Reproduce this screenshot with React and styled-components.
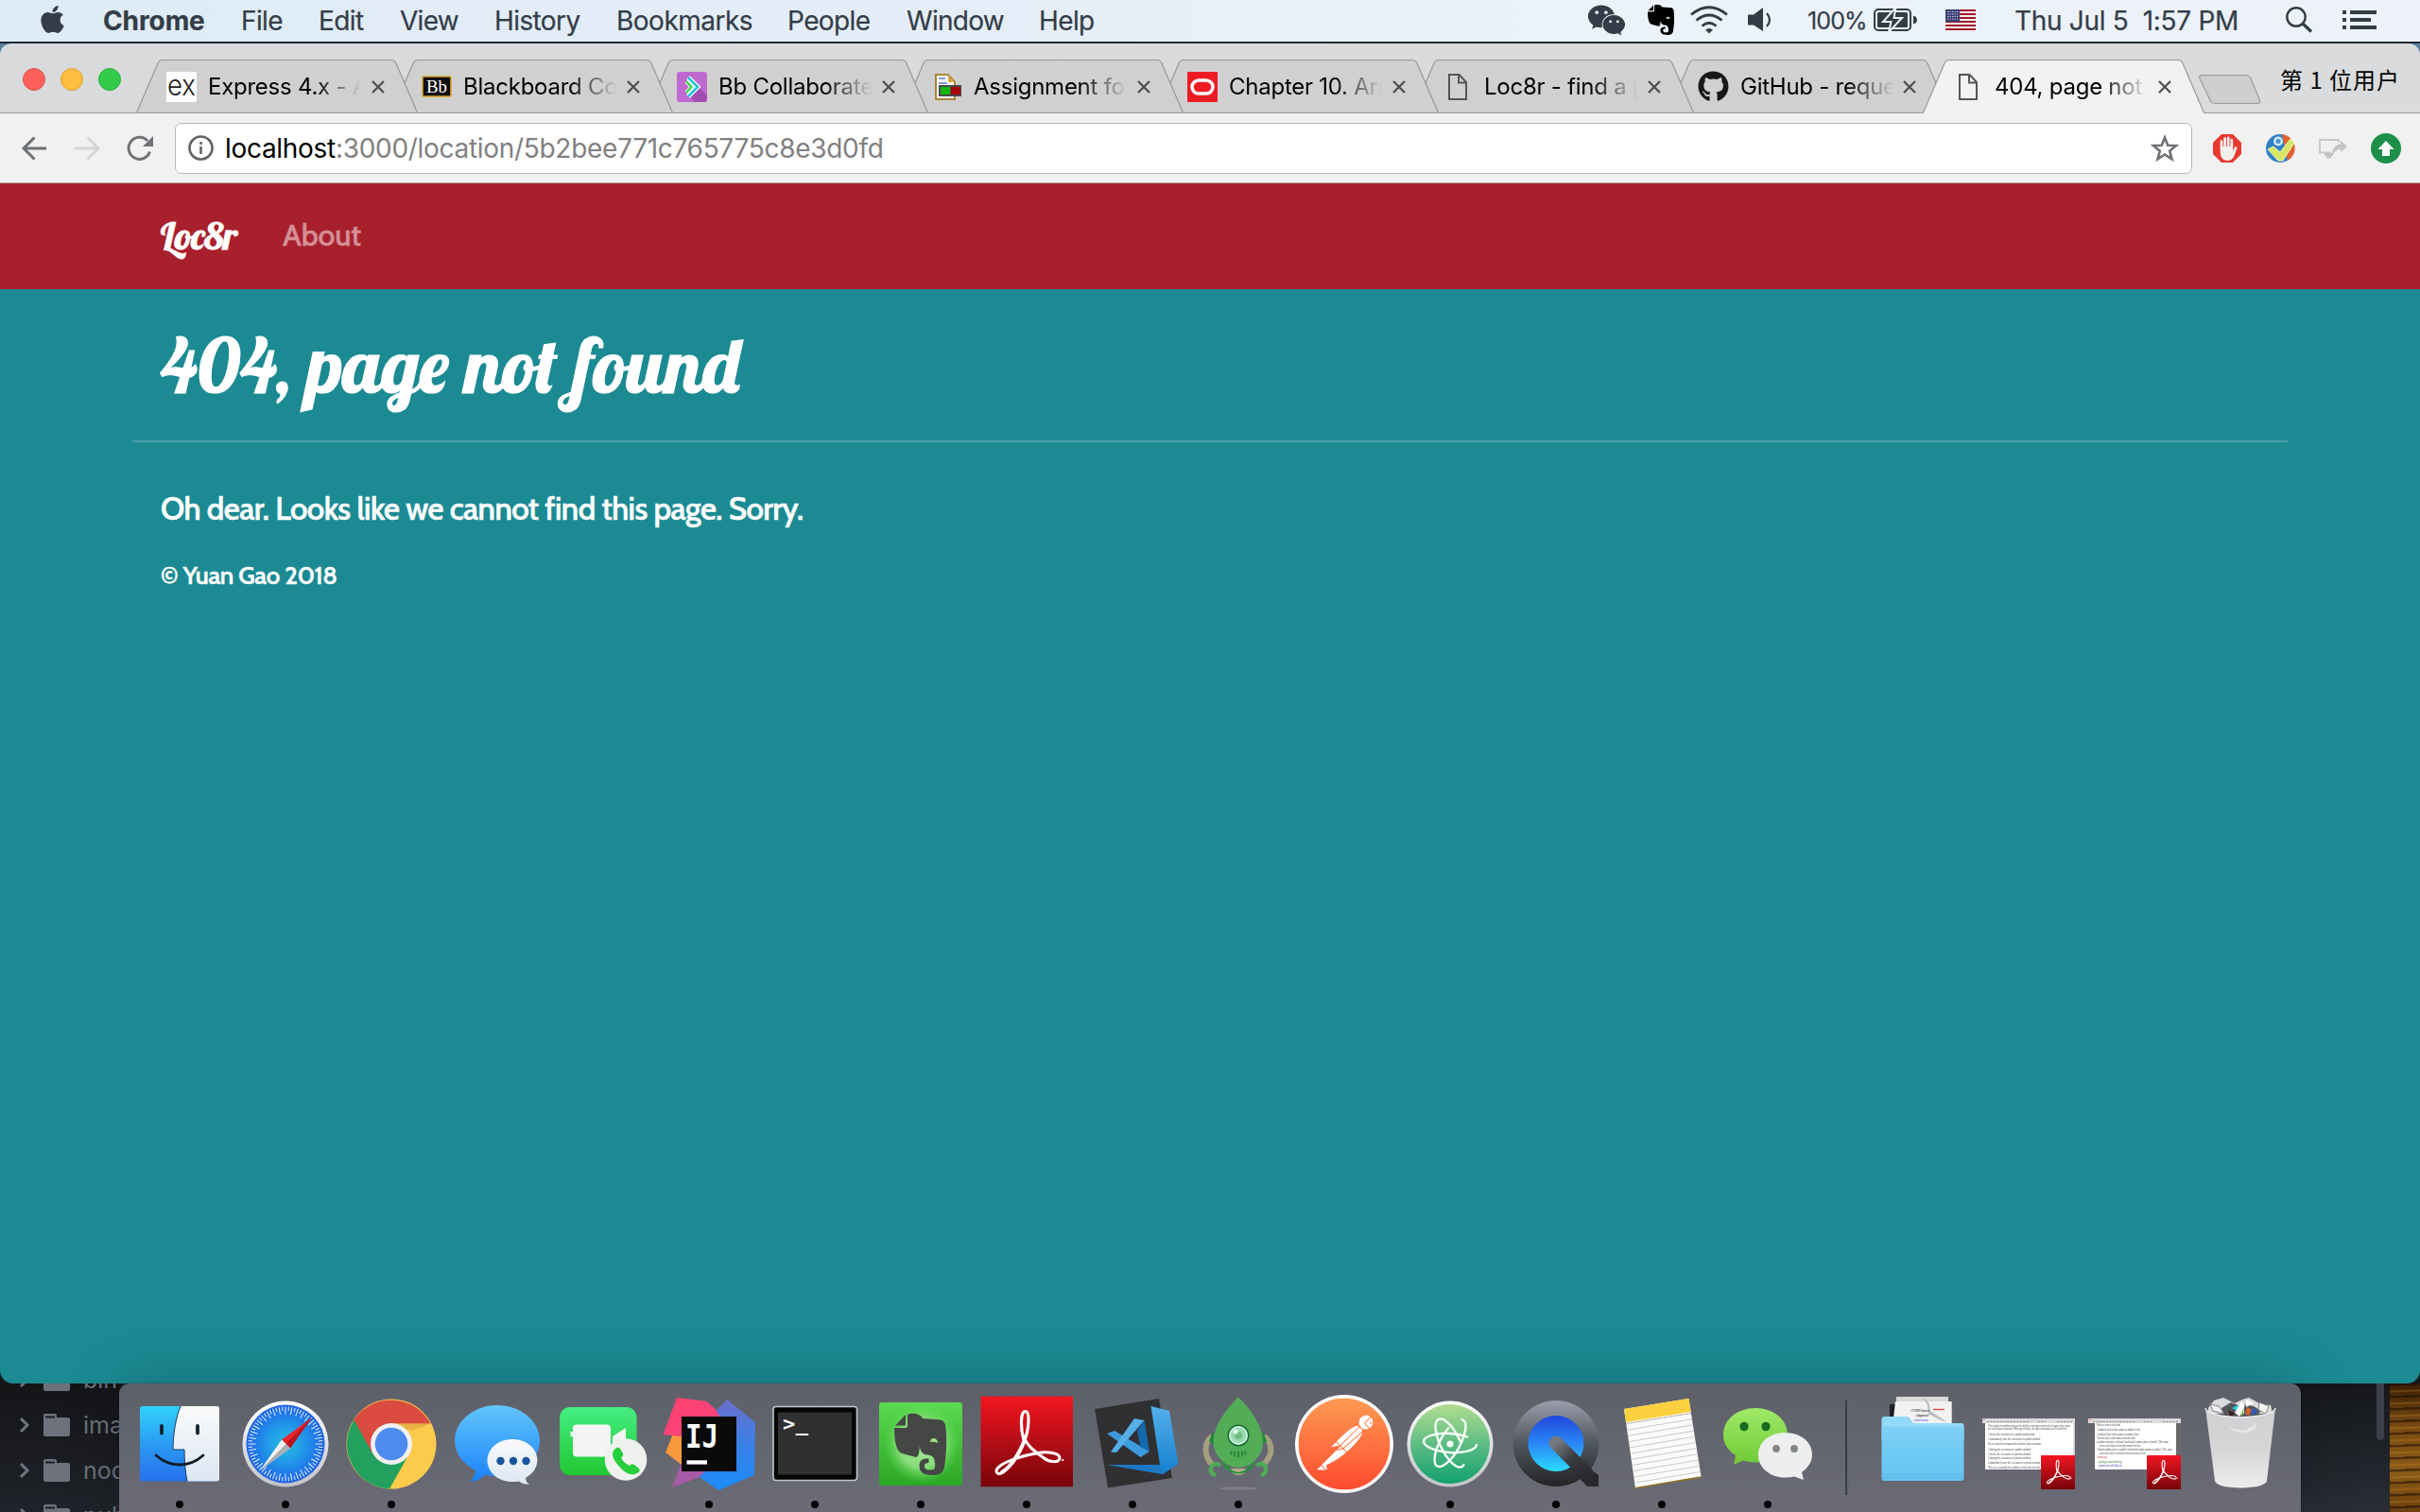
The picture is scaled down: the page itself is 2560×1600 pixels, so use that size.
import React from "react";
import styled, { createGlobalStyle, css } from "styled-components";
import { FaApple, FaWeixin, FaGithub } from "react-icons/fa";
import { SiPostman } from "react-icons/si";

const GlobalStyle = createGlobalStyle`
  * { box-sizing: border-box; }
  body { margin: 0; background: #17191d; font-family: Inter, "Liberation Sans", sans-serif; }
  svg { display: block; flex: none; }
`;

const Screen = styled.div`
  width: 2560px;
  height: 1600px;
  display: flex;
  flex-direction: column;
  overflow: hidden;
  background: linear-gradient(#3f5a75 0, #3f5a75 200px, #17191d 201px);
`;

/* ---------- menu bar ---------- */
const MenuBar = styled.header`
  height: 46px;
  flex: none;
  display: flex;
  align-items: center;
  padding: 0 46px 2px 42px;
  background: linear-gradient(90deg, #deebf5, #e5eef8 40%, #ebf2fa 65%, #edf2f9);
  border-bottom: 2px solid #1d2937;
  color: #333d47;
`;
const Menus = styled.nav`
  display: flex;
  gap: 38px;
  margin-left: 41px;
  flex: 1;
`;
const MenuItem = styled.span`
  width: ${(p) => p.$w}px;
  padding-top: 3px;
  font-size: 28px;
  line-height: 39px;
  font-weight: ${(p) => (p.$bold ? 700 : 400)};
  letter-spacing: ${(p) => p.$ls ?? -0.5}px;
  white-space: nowrap;
  -webkit-text-stroke: 0.2px currentColor;
`;
const StatusArea = styled.div`
  display: flex;
  align-items: center;
`;
const Status = styled.div`
  width: ${(p) => p.$w}px;
  margin-right: ${(p) => p.$gap}px;
`;
const StatusText = styled(Status)`
  padding-top: 3px;
  font-size: ${(p) => p.$size}px;
  letter-spacing: ${(p) => p.$ls}px;
  line-height: 39px;
  white-space: pre;
  -webkit-text-stroke: 0.2px currentColor;
`;

/* ---------- browser window ---------- */
const Window = styled.main`
  height: 1418px;
  flex: none;
  display: flex;
  flex-direction: column;
  border-radius: 12px 12px 14px 14px;
  overflow: hidden;
  background: #1c8a93;
`;
const WindowBack = styled.div`
  background: linear-gradient(#5f7f9f 0, #5f7f9f 100px, #15171a 101px);
`;
const TabStrip = styled.div`
  height: 74px;
  flex: none;
  display: flex;
  background: linear-gradient(90deg, #d8dadb, #dadbdd);
  box-shadow: inset 0 -1px #999;
  padding-left: 24px;
`;
const Lights = styled.div`
  display: flex;
  gap: 16px;
  width: 120px;
  padding-top: 26px;
`;
const Light = styled.i`
  width: 24px;
  height: 24px;
  border-radius: 50%;
  background: ${(p) => p.$fill};
  border: 1px solid ${(p) => p.$edge};
`;
const Tab = styled.div`
  position: relative;
  z-index: ${(p) => p.$z};
  width: 298px;
  height: 57px;
  margin: 17px -28px 0 0;
  padding: 0 35px 0 32px;
  display: flex;
  align-items: center;
  flex: none;
`;
const TabShape = styled.svg`
  position: absolute;
  left: 0;
  top: 0;
  z-index: -1;
`;
const TabLabel = styled.span`
  width: 164px;
  margin: 0 9px 0 12px;
  font-size: 24px;
  letter-spacing: -0.25px;
  white-space: nowrap;
  overflow: hidden;
  color: #000;
  mask-image: linear-gradient(90deg, #000 112px, transparent 162px);
`;
const NewTab = styled.div`
  margin: 33px 0 0 22px;
`;
const UserName = styled.span`
  margin: 18px 0 0 20px;
  font: 24px/40px "Noto Sans CJK SC", sans-serif;
  letter-spacing: 1px;
  color: #000;
  white-space: nowrap;
`;
const Toolbar = styled.div`
  height: 74px;
  flex: none;
  display: flex;
  align-items: center;
  background: #f1f1f1;
  border-bottom: 1px solid #b4b0b0;
  padding: 0 20px 0 22px;
`;
const NavButtons = styled.div`
  display: flex;
  gap: 26px;
  width: 163px;
`;
const UrlField = styled.div`
  height: 54px;
  width: 2134px;
  display: flex;
  align-items: center;
  background: #fff;
  border: 1px solid #b5b5b5;
  border-radius: 7px;
  padding: 0 12px 0 13px;
`;
const Url = styled.span`
  flex: 1;
  margin-left: 12px;
  font-size: 28px;
  letter-spacing: -0.3px;
  color: #808080;
  b { font-weight: 400; color: #000; }
`;
const Extensions = styled.div`
  flex: 1;
  display: flex;
  align-items: center;
  justify-content: space-between;
  padding-left: 21px;
`;

/* ---------- page ---------- */
const SiteNav = styled.div`
  height: 112px;
  flex: none;
  display: flex;
  align-items: center;
  background: #a9202d;
  padding: 0 170px 2px;
`;
const script = css`
  font-family: Lobster, "Liberation Serif", serif;
  font-weight: 400;
  color: #fff;
  white-space: nowrap;
`;
const Brand = styled.a`
  ${script}
  width: 129px;
  font-size: 40px;
  line-height: 60px;
  -webkit-text-stroke: 0.8px #fff;
`;
const NavLink = styled.a`
  font: 500 32px/56px Cabin, Lato, sans-serif;
  letter-spacing: -0.15px;
  color: #d48f96;
  -webkit-text-stroke: 0.4px #d48f96;
`;
const Title = styled.h1`
  ${script}
  margin: 27px 0 0;
  padding-left: 30px;
  font-size: 80px;
  line-height: 106px;
  -webkit-text-stroke: 1.2px #fff;
`;
const Article = styled.section`
  padding: 0 140px;
`;
const Rule = styled.hr`
  height: 2px;
  border: 0;
  margin: 27px 0 0;
  background: #499fa8;
`;
const Lead = styled.p`
  margin: 48px 30px 0;
  font: 500 33px/44px Cabin, Lato, sans-serif;
  letter-spacing: -0.56px;
  color: #fff;
  -webkit-text-stroke: 0.5px #fff;
`;
const Footnote = styled.p`
  margin: 31px 30px 0;
  font: 500 26px/36px Cabin, Lato, sans-serif;
  letter-spacing: -0.35px;
  color: #fff;
  -webkit-text-stroke: 0.5px #fff;
`;

/* ---------- bottom of desktop ---------- */
const Bottom = styled.div`
  height: 136px;
  display: grid;
  grid-template-columns: 126px 2308px 126px;
`;
const FileTree = styled.div`
  height: 136px;
  overflow: hidden;
  background: linear-gradient(#141517, #20232a);
  ul { list-style: none; margin: -28px 0 0; padding: 0 0 0 20px; }
`;
const FileRow = styled.li`
  height: 48px;
  display: flex;
  align-items: center;
  gap: 14px;
  font-size: 25px;
  color: #6c727c;
  white-space: nowrap;
`;
const Dock = styled.div`
  position: relative;
  z-index: 2;
  display: flex;
  padding-left: 8px;
  border-radius: 11px 11px 0 0;
  background: linear-gradient(#5e6069, #6a6b76);
  box-shadow: 0 0 60px rgba(0, 10, 15, 0.22), 0 0 2px rgba(0, 0, 0, 0.4);
`;
const Divider = styled.div`
  width: 4px;
  height: 100px;
  margin: 18px 22px 18px 26px;
  border-left: 2px solid #393c46;
  border-right: 2px solid #62646e;
`;
const RightEdge = styled.div`
  display: flex;
  justify-content: flex-end;
  background: linear-gradient(#15171a, #292d35);
`;
const ScrollThumb = styled.div`
  width: 8px;
  height: 60px;
  margin-right: 6px;
  border-radius: 0 0 4px 4px;
  background: #3c404b;
`;
const Wallpaper = styled.div`
  width: 32px;
  background:
    repeating-linear-gradient(178deg, rgba(20, 8, 0, 0.5) 0 2px, transparent 3px 7px, rgba(220, 150, 40, 0.25) 8px 9px, transparent 10px 13px),
    linear-gradient(#3a1f06, #7a4c12 35%, #8a5a17 70%, #6b4010);
`;
const PaintDefs = styled.svg`
  position: absolute;
`;

const Close = () => (
  <svg width="14" height="14" viewBox="0 0 14 14">
    <path d="M1 1l12 12M13 1L1 13" stroke="#4c4c4c" strokeWidth="2.2" />
  </svg>
);

const DocIcon = () => (
  <svg width="32" height="32" viewBox="0 0 32 32">
    <path d="M7 3h10.500l7.500 8v18H7zM17 3v8.500h8" fill="none" stroke="#555" strokeWidth="2" />
  </svg>
);

const Elephant = ({ fill, eye, transform }) => (
  <g transform={transform}>
    <path d="M29 44.500L40 33v11.500z" fill={fill} />
    <path
      d="M42 33C46 31 55 31 58 37L72 38C80 38 82 41 82.500 47C84 60 83 76 81 88C80 95 76 97 68 97C58 97 54.500 93 54.500 87C54.500 81 58 79.500 64.500 79.500V84C61 84 59.500 85 60 88C60.500 91 63 91.500 67 91.500C71 91.500 71.500 89 71 84C70.500 78 68 76 63 75.500C57 75 55 71 55 65C54.500 73 54 78 51 78L36 74C30 72 28 60 28 47H39C42 47 42 46 42 43z"
      fill={fill}
    />
    <path d="M66 62q0-4 4-4 4 1 4 5-4-2-8-1z" fill={eye} />
  </g>
);

const favicons = {
  express: (
    <svg width="32" height="32" viewBox="0 0 32 32">
      <rect width="32" height="32" fill="#fff" />
      <text x="1" y="24.500" fontSize="30" fontWeight="300" textLength="30" lengthAdjust="spacingAndGlyphs" fill="#222" fontFamily="Inter">ex</text>
    </svg>
  ),
  blackboard: (
    <svg width="32" height="32" viewBox="0 0 32 32">
      <rect x="1" y="5" width="30" height="21" rx="1" fill="#0d0d0d" stroke="#d9a62a" strokeWidth="1.600" />
      <text x="5" y="22" fontSize="19" fontWeight="400" textLength="22" lengthAdjust="spacingAndGlyphs" fill="#fff" fontFamily="Liberation Serif">Bb</text>
    </svg>
  ),
  collaborate: (
    <svg width="32" height="32" viewBox="0 0 32 32">
      <rect width="32" height="32" rx="3" fill="#c069d0" />
      <path d="M15 27l9-10 8 8v4q0 3-3 3H19z" fill="#a24fb4" />
      <path d="M12 6l10 10-10 10" fill="none" stroke="#fff" strokeWidth="5" />
      <path d="M12 6l10 10-10 10" fill="none" stroke="#19c3dc" strokeWidth="2.500" />
      <path d="M10 10l5.500 6-5.500 6" fill="none" stroke="#fff" strokeWidth="4" />
      <path d="M10 10l5.500 6-5.500 6" fill="none" stroke="#22d63a" strokeWidth="2" />
    </svg>
  ),
  assignment: (
    <svg width="32" height="32" viewBox="0 0 32 32">
      <path d="M4 3h13l7 8v18H4z" fill="#fff" stroke="#a98537" strokeWidth="2" />
      <path d="M17 3v8h7z" fill="#d9a544" />
      <path d="M7 7h7M7 12h9" stroke="#8797c5" strokeWidth="2" />
      <rect x="7" y="14" width="24" height="12" fill="#4a4a4a" />
      <rect x="9" y="16" width="10" height="8" fill="#12b80e" />
      <rect x="20" y="16" width="10" height="8" fill="#a60505" />
    </svg>
  ),
  oracle: (
    <svg width="32" height="32" viewBox="0 0 32 32">
      <rect width="32" height="32" fill="#ed1c24" />
      <rect x="5" y="9" width="22" height="14" rx="7" fill="none" stroke="#fff" strokeWidth="3.500" />
    </svg>
  ),
  doc: <DocIcon />,
  github: <FaGithub size={33} color="#1a1718" />,
};

const tabs = [
  ["express", "Express 4.x - API"],
  ["blackboard", "Blackboard Collab"],
  ["collaborate", "Bb Collaborate U"],
  ["assignment", "Assignment for w"],
  ["oracle", "Chapter 10. Arrays"],
  ["doc", "Loc8r - find a pla"],
  ["github", "GitHub - request/"],
  ["doc", "404, page not fo"],
];

const menus = [
  ["Chrome", 108, -0.1],
  ["File", 44, -0.6],
  ["Edit", 48, -0.6],
  ["View", 62, -0.7],
  ["History", 91, -0.6],
  ["Bookmarks", 143, -0.5],
  ["People", 88, -0.6],
  ["Window", 102, -0.7],
  ["Help", 60, -0.6],
];

const AdobeMark = ({ transform }) => (
  <g transform={transform} fill="none" stroke="#fff" strokeLinecap="round" strokeLinejoin="round">
    <path d="M53 60C50 50 48.500 29 55 29.500C60 30 58 50 54 60" strokeWidth="3.200" />
    <path d="M54 60C47 77 35 92 29 95C24 97 22 92 27 88C34 82 53 76 68 73.500C78 72 91 73 91 79C90 85 79 83 73 78C62 70 56 65 53 56" strokeWidth="3" />
    <path d="M54 60C47 77 38 89 30 94" strokeWidth="4" />
    <circle cx="94" cy="81" r=".8" strokeWidth="1" />
  </g>
);

const Thumb = ({ lines, side }) => (
  <g>
    <rect x="7" y="37" width="98" height="54" fill="#fff" />
    <rect x="7" y="37" width="98" height="5" fill="#dcdadb" />
    <circle cx="8.800" cy="38.200" r=".8" fill="#e4574f" />
    <path d="M12 40.500h46M66 40.500h8M86 40.500h17" stroke="#8b8d93" strokeWidth="1" strokeDasharray="2 1.500" />
    <rect x="7" y="42" width={side ? 7 : 3} height="49" fill="#66676a" />
    <rect x={side ? 100 : 103.500} y="42" width={side ? 5 : 1.500} height="36" fill={side ? "#66676a" : "#c9c9c9"} />
    {lines.map(([x, y, t, w, fill]) => (
      <text key={y} x={x} y={y} fontSize="3.400" textLength={w} lengthAdjust="spacingAndGlyphs" fill={fill || "#333"} fontFamily="Liberation Serif">{t}</text>
    ))}
    <rect x="69" y="76" width="36" height="36" fill="url(#adobe)" />
    <AdobeMark transform="translate(66.500 70.500) scale(.37)" />
  </g>
);

const ticks = Array.from({ length: 72 }, (_, i) => i * 5);

const dockIcons = [
  ["finder", true, (
    <g>
      <rect x="14" y="24" width="84" height="79.500" rx="3" fill="url(#finderBlue)" />
      <path d="M57 24H95q3 0 3 3v73.500q0 3-3 3H64C62 94 61 82 61 70H49C49 54 52 36 57 24z" fill="url(#paper)" />
      <path d="M57 24C52 36 49 54 49 70H61C61 82 62 94 64 103.500" fill="none" stroke="#173b63" strokeWidth="1" />
      <path d="M37 45v7.500M75 45v7.500" stroke="#15212d" strokeWidth="3.800" strokeLinecap="round" />
      <path d="M31 76Q42 86 56 86T81 76" fill="none" stroke="#141c26" strokeWidth="2.800" strokeLinecap="round" />
    </g>
  )],
  ["safari", true, (
    <g>
      <circle cx="56" cy="64" r="45.500" fill="url(#ring)" />
      <circle cx="56" cy="64" r="41.500" fill="url(#safari)" />
      {ticks.map((a) => (
        <path key={a} d={a % 10 ? "M56 24.500v4.500" : "M56 24.500v8"} stroke="#e3f0fa" strokeWidth="1" transform={`rotate(${a} 56 64)`} />
      ))}
      <path d="M84 36L52 59.500 61 68.500z" fill="#e9232c" />
      <path d="M84 36L56.500 64 61 68.500z" fill="#b9141f" />
      <path d="M29 92L52 59.500 61 68.500z" fill="#f2f2f2" />
      <path d="M29 92L56.500 64 61 68.500z" fill="#a9adb3" />
    </g>
  )],
  ["chrome", true, (
    <g>
      <circle cx="56" cy="64" r="47.500" fill="#fdcb4c" />
      <path d="M15.500 39.500A47.500 47.500 0 0 1 97.500 42.500H56L35 76z" fill="#db4b40" />
      <path d="M16.500 38.500A47.500 47.500 0 0 0 54 111.500L74 76 56 64 36 74z" fill="#24a05e" />
      <path d="M56 42.500H97.500L77 50z" fill="#d99a3a" opacity=".55" />
      <circle cx="56" cy="64" r="22" fill="#f1f1f1" />
      <circle cx="56" cy="64" r="17.300" fill="#4c8bf0" />
    </g>
  )],
  ["messages", false, (
    <g>
      <path d="M56 23C81 23 101 40 101 60.500S81 98 56 98Q49 98 43 96.500 36 104 27 103.500 33 98 33 92 11 80 11 60.500C11 40 31 23 56 23z" fill="url(#blueBubble)" />
      <path d="M72 59C87 59 98.500 69 98.500 81.500Q98 93 86 100 86 104 90 107 82 106.500 79 103.500 76 104 72 104C57 104 45.500 94 45.500 81.500S57 59 72 59z" fill="url(#paper)" />
      <g fill="#17549b"><circle cx="59.500" cy="82" r="4.200" /><circle cx="73" cy="82" r="4.200" /><circle cx="86.500" cy="82" r="4.200" /></g>
    </g>
  )],
  ["facetime", false, (
    <g>
      <rect x="10" y="25" width="81.500" height="72" rx="11" fill="url(#green)" />
      <rect x="24" y="43.500" width="40" height="34" rx="4" fill="#f3f5f3" />
      <rect x="21.500" y="51" width="3" height="5" fill="#e7f5e8" />
      <path d="M66 56L80 47v28L66 66z" fill="#f3f5f3" />
      <circle cx="80" cy="80.500" r="22.300" fill="#eef1ee" />
      <path d="M69 69q3-3 5 0l3 5q1 3-2 4 2 6 9 9 2-3 5-1l5 4q2 3-2 5-7 4-16-4-11-11-10-17 0-3 3-5z" fill="#27cf3c" />
    </g>
  )],
  ["intellij", true, (
    <g>
      <path d="M18 53L10 73 40 96 50 60z" fill="#f9993d" />
      <path d="M27 84L16.600 110 66 92 85 46 53 18.700 45 60z" fill="#a75aa5" />
      <path d="M22 15L53 18.700 83 46 60 60 7.600 54z" fill="url(#ijPink)" />
      <path d="M75 17L105 41 104 97 66.400 113 46 99 85 60 63.500 29z" fill="url(#ijBlue)" />
      <rect x="27" y="35" width="58" height="58" fill="#0a0a0a" />
      <text x="31" y="68" fontSize="34" fontWeight="700" textLength="35" lengthAdjust="spacingAndGlyphs" fill="#fff" fontFamily="DejaVu Sans Mono">IJ</text>
      <rect x="32.500" y="81.300" width="21.500" height="4.300" fill="#fff" />
    </g>
  )],
  ["terminal", true, (
    <g>
      <rect x="12" y="24.500" width="88.500" height="78" rx="3" fill="#050505" stroke="#c1c7cb" strokeWidth="1.600" />
      <rect x="17" y="30.500" width="78" height="66" fill="#303030" />
      <text x="22" y="50" fontSize="22" fontWeight="700" textLength="27" fill="#fff" fontFamily="DejaVu Sans Mono">&gt;_</text>
    </g>
  )],
  ["evernote", true, (
    <g>
      <rect x="12" y="20" width="88" height="88" rx="3" fill="url(#everGreen)" />
      <ellipse cx="57" cy="64" rx="40" ry="42" fill="url(#everGlow)" />
      <Elephant fill="#454745" eye="#9be489" />
    </g>
  )],
  ["acrobat", true, (
    <g>
      <rect x="7.500" y="13.700" width="97.500" height="95.500" fill="url(#adobe)" />
      <AdobeMark />
    </g>
  )],
  ["vscode", true, (
    <g>
      <path d="M16 27L84 16 98 100 30 110.500z" fill="#303033" />
      <path d="M29 53L37 50 74 72 64.500 78z" fill="#3c9bdc" />
      <path d="M68.500 39L74 72 64.500 67 61 50z" fill="#1568ad" />
      <path d="M33 72.500L58 37 68.500 39 39 73z" fill="#55aee9" />
      <path d="M30 86L85 86 75.500 24 95 29 104.500 85 88 96z" fill="url(#codeBlue)" />
      <path d="M30 86H85L88 96z" fill="#1c78c2" />
    </g>
  )],
  ["robo", true, (
    <g>
      <path d="M28 56Q20 62 22 74 23 81 29 86M83 56Q92 62 90 74 88 81 82 86" fill="none" stroke="#a3a07f" strokeWidth="6" />
      <path d="M48 90q0 7 8 7t8-7z" fill="#b1ab86" />
      <path d="M29 51l-4 10 6 5zM82 51l4 10-6 5z" fill="#1f8a38" />
      <path d="M38 80Q48 94 56 94T74 80L70 90Q62 95.500 56 95.500T42 90z" fill="#24913e" />
      <path d="M56 14.500C70 28 82 46 82 62 82 76 70 89 56 89S29.500 76 29.500 62C29.500 46 42 28 56 14.500z" fill="#53ad57" />
      <circle cx="56" cy="55" r="11.500" fill="#166b31" />
      <circle cx="56" cy="55" r="10" fill="#d4f7e6" />
      <circle cx="56" cy="55" r="8.300" fill="#98d9ad" />
      <circle cx="56" cy="55" r="4" fill="#70bd83" />
      <circle cx="53" cy="51" r="2.600" fill="#dff5e8" />
      <path d="M48.500 71.500v4M52 71.500v6M56 71.500v6.500M60 71.500v6M63.500 71.500v4" stroke="#1f8437" strokeWidth="1.800" />
      <path d="M37 87Q31 83 27.500 88 25 95 32 97M75 87Q81 83 84.500 88 87 95 80 97" fill="none" stroke="#4eaa56" strokeWidth="4.500" />
      <ellipse cx="56" cy="111" rx="20" ry="1.800" fill="#7e7f83" />
    </g>
  )],
  ["postman", false, (
    <g>
      <circle cx="56" cy="64" r="52" fill="#fff" />
      <SiPostman x="7.500" y="15.500" size={97} fill="url(#postman)" />
    </g>
  )],
  ["atom", true, (
    <g>
      <circle cx="56" cy="64" r="45.500" fill="url(#ring)" />
      <circle cx="56" cy="64" r="42" fill="url(#atom)" />
      <g fill="none" stroke="#f5fff8" strokeWidth="2.400" strokeLinecap="round">
        <ellipse cx="56" cy="63" rx="28" ry="10" strokeDasharray="112 14" transform="rotate(4 56 63)" />
        <ellipse cx="56" cy="63" rx="28" ry="10.500" strokeDasharray="100 24" transform="rotate(64 56 63)" />
        <ellipse cx="56" cy="63" rx="28" ry="10.500" strokeDasharray="108 18" transform="rotate(-61 56 63)" />
      </g>
      <circle cx="56" cy="64" r="3.500" fill="#fff" />
    </g>
  )],
  ["quicktime", true, (
    <g>
      <circle cx="56" cy="63.500" r="45.500" fill="url(#qtRing)" />
      <path d="M70 74L101 97V109H89L66 84z" fill="#26282b" />
      <circle cx="56" cy="63.500" r="29.500" fill="url(#qtBlue)" />
      <path d="M56 63L88 95" stroke="url(#qtTail)" strokeWidth="15" strokeLinecap="round" />
    </g>
  )],
  ["notes", true, (
    <g>
      <path d="M16 27L84.500 16 97.600 99 28 110.700z" fill="#fafafa" />
      <path d="M28 110.700L97.600 99" stroke="#8d6f1d" strokeWidth="1.500" />
      <path d="M16 27L84.500 16 86.600 30 18 41z" fill="#fcd03f" />
      <path d="M18.500 42.500L87 31.500" stroke="#888" strokeWidth="1" strokeDasharray="1.500 1" />
      {[1, 2, 3, 4, 5, 6, 7, 8, 9, 10].map((i) => (
        <path key={i} d={`M${18.500 + i * 0.95} ${43 + i * 6.200}L${87 + i * 0.95} ${31.500 + i * 6.200}`} stroke="#c9c9c9" strokeWidth="1" />
      ))}
    </g>
  )],
  ["wechat", true, (
    <g>
      <path d="M43 26C62 26 77 38 77 54.500S62 83.500 43 83.500Q36 83.500 30 81.500L20 86 22 76Q9 68 9 54.500C9 38 24 26 43 26z" fill="url(#wxGreen)" />
      <g fill="#176b20"><ellipse cx="31" cy="45.500" rx="4.600" ry="4.800" /><ellipse cx="54" cy="45.500" rx="4.600" ry="4.800" /></g>
      <path d="M74.500 52C91 52 103 62 103 75.500Q103 86 92 94L94 102 84 98.500Q80 99.500 74.500 99.500C58 99.500 46 89 46 75.500S58 52 74.500 52z" fill="#eceeef" />
      <g fill="#838789"><circle cx="65" cy="69" r="3.900" /><circle cx="84" cy="69" r="3.900" /></g>
    </g>
  )],
];

const dockFiles = [
  ["documents", (
    <g>
      <path d="M21 22h10v20H21z" fill="#1e1f22" />
      <path d="M28 14H83v8H28z" fill="#d9d9d9" />
      <path d="M27 19H86.700V46H24z" fill="#f2f2f2" />
      <path d="M55 15C62 17 64 23 64 29L82 41Q66 36 62 31 62 20 55 15z" fill="#bdbdbd" />
      <text x="43" y="29.500" fontSize="4" textLength="20" fill="#444" fontFamily="Liberation Serif">COMP6 System</text>
      <text x="48" y="34.500" fontSize="4" textLength="15" fill="#444" fontFamily="Liberation Serif">Assignment 7</text>
      <path d="M67 27.500H79" stroke="#e05252" strokeWidth="1.500" />
      <path d="M47 39H62" stroke="#6d7be0" strokeWidth="1" />
      <path d="M12.500 38q0-3 3-3H39q3 0 4 3l2 3q1 1 3 1H97q2.500 0 2.500 3V60h-87z" fill="#93d9fc" />
      <path d="M12.500 47q0-1.500 2-1.500H97.500q2 0 2 1.500v53q0 3-3 3h-81q-3 0-3-3z" fill="url(#folder)" />
      <path d="M13 96.500H99M13 99.500H99" stroke="#54b5e2" strokeWidth=".8" />
    </g>
  )],
  ["pdf-one", (
    <Thumb lines={[
      [13, 45.500, "These kinds of conditions that need to hold for each object and for the lifespan of the object", 87],
      [13, 49, "are called object invariants. More specifically, our object invariants need to hold true", 83],
      [13, 55, "1  before the execution of a public method and", 49],
      [13, 59.500, "2  immediately after the execution of a public method", 55],
      [13, 65, "We are allowed to temporarily break the object invariant", 56],
      [13, 71, "1  during the execution of a public method", 45],
      [13, 75.500, "2  before the execution of a private method", 45],
      [13, 80, "3  during the execution of a private method", 45],
      [13, 84.500, "4  immediately after the execution of a private method", 55],
      [13, 90, "These are essentially the windows of time that our code", 55],
    ]} />
  )],
  ["pdf-two", (
    <Thumb side lines={[
      [16, 44.500, "What we want to check that", 25],
      [16, 50, "1  author1.first is the name as author1.first", 46],
      [16, 54.500, "2  author1.last is the name as author1.last", 44],
      [16, 59, "3  book1.title is the name as book1.title", 41],
      [16, 63, "4  author and price in book1 and book1.author price in book1. The same", 76],
      [19, 66.500, "between the objects in already-formed first files.", 44],
      [16, 71, "5  book1.author price is author1 and book1.author prints is author1. The same", 80],
      [19, 74.500, "between the objects in already-declared last and one fields.", 49],
      [16, 79, "Author.java", 11, "#b33"],
      [18, 83.500, "package samelastthing;", 25, "#2a7a2a"],
      [18, 88, "import java.util.Objects;", 25, "#2b2bd0"],
    ]} />
  )],
  ["trash", (
    <g>
      <path d="M22 26L28 18 38 15 50 21 58 17 65 15 78 22 88 23 90 32H22z" fill="#d9dadb" />
      <path d="M36 26l10-6 10 4 4 10H38zM60 22l10 2 8 5-6 6H60z" fill="#54575b" />
      <path d="M47 26l6-3 6 2-5 5z" fill="#25cfe0" />
      <path d="M43 28l8 4-6 3z" fill="#3a2020" />
      <path d="M63 25l5 3-3 6-4-2z" fill="#d4622e" />
      <path d="M69 26l5 2-2 5-5-1z" fill="#2f5fb5" />
      <path d="M57 24l3 1-2 9-4-1z" fill="#8bc34a" />
      <path d="M24 22l9 2 6 8-12-3zM76 20l10 4-3 8-8-4z" fill="#f3f3f3" stroke="#6b6d70" strokeWidth=".8" />
      <path d="M50 31l7-12 4 4-6 12zM62 17l8 4-8 4z" fill="#fff" />
      <path d="M19 26Q20 34 56 36 92 34 93 26L84 103Q82 110 56 110.500 31 110 29 103z" fill="url(#bin)" />
      <path d="M19 26Q20 34 56 36 92 34 93 26" fill="none" stroke="#f2f3f4" strokeWidth="1.400" />
      <path d="M44 45Q60 56 74 41 72 52 58 52 48 52 44 45z" fill="#fff" opacity=".45" />
    </g>
  )],
];

const Gradient = ({ id, stops, diag }) => (
  <linearGradient id={id} x1="0" y1="0" x2={diag ? 1 : 0} y2="1">
    {stops.map((c, i) => <stop key={i} offset={i / (stops.length - 1)} stopColor={c} />)}
  </linearGradient>
);

const SharedPaints = () => (
  <PaintDefs width="0" height="0">
    <defs>
      <Gradient id="finderBlue" stops={["#2fd2fc", "#2b9cf3", "#2670ec"]} />
      <Gradient id="paper" stops={["#fafafa", "#dbe7f3"]} />
      <Gradient id="ring" stops={["#ffffff", "#c2c3c6"]} />
      <Gradient id="blueBubble" stops={["#62c6fa", "#1a82fb"]} />
      <Gradient id="green" stops={["#45ee82", "#20c832"]} />
      <Gradient id="ijPink" diag stops={["#ff4070", "#fb4276", "#9a62b4"]} />
      <Gradient id="ijBlue" stops={["#6a70ca", "#3a80e8", "#1a8cf8"]} />
      <Gradient id="everGreen" stops={["#5cda50", "#2ba626"]} />
      <Gradient id="adobe" stops={["#f3151f", "#b50d17", "#760408"]} />
      <Gradient id="codeBlue" stops={["#54b0ea", "#157fce"]} />
      <Gradient id="postman" stops={["#fe9a52", "#fd4b2f"]} />
      <Gradient id="atom" stops={["#b3dd90", "#5dbd83", "#12a070"]} />
      <Gradient id="qtRing" stops={["#9a9fac", "#50565e", "#232426"]} />
      <Gradient id="qtBlue" stops={["#1f48df", "#2a86f4", "#2bdcff"]} />
      <Gradient id="qtTail" diag stops={["#747a82", "#3a3d41", "#2a2c2f"]} />
      <Gradient id="wxGreen" stops={["#a0e968", "#6fca35"]} />
      <Gradient id="folder" stops={["#7fd0f7", "#6fcbf5", "#65c2ee"]} />
      <Gradient id="bin" stops={["#cfd1d4", "#d5d5d5", "#eceded"]} />
      <radialGradient id="everGlow">
        <stop offset="0" stopColor="#a9ee9a" />
        <stop offset=".6" stopColor="#9be58c" stopOpacity=".8" />
        <stop offset="1" stopColor="#5cda50" stopOpacity="0" />
      </radialGradient>
      <radialGradient id="safari">
        <stop offset="0" stopColor="#27c0de" />
        <stop offset=".5" stopColor="#2196ea" />
        <stop offset="1" stopColor="#1e62e6" />
      </radialGradient>
    </defs>
  </PaintDefs>
);

const DockIcon = ({ running, children }) => (
  <svg width="112" height="136" viewBox="0 0 112 136">
    {children}
    {running && <circle cx="56" cy="128" r="4" fill="#000" />}
  </svg>
);

export default function App() {
  return (
    <Screen>
      <GlobalStyle />
      <SharedPaints />
      <MenuBar>
        <svg width="26" height="32" viewBox="0 0 26 32"><FaApple x="-3" y="-1" size={33} /></svg>
        <Menus>
          {menus.map(([name, w, ls], i) => (
            <MenuItem key={name} $w={w} $ls={ls} $bold={i === 0}>{name}</MenuItem>
          ))}
        </Menus>
        <StatusArea>
          <Status $w={40} $gap={24}><FaWeixin size={41} /></Status>
          <Status $w={28} $gap={17}>
            <svg width="28" height="32" viewBox="28 32 55 65" preserveAspectRatio="none">
              <Elephant fill="#000" eye="#ebf2fa" />
            </svg>
          </Status>
          <Status $w={40} $gap={21}>
            <svg width="40" height="30" viewBox="0 0 40 30" fill="none" stroke="#333d47" strokeWidth="2.800">
              <path d="M1 9.500Q20-6 39 9.500M6.500 15.500Q20 4.500 33.500 15.500M12.500 21.500Q20 15 27.500 21.500" />
              <path d="M16 25.500Q20 22.500 24 25.500L20 29.500z" fill="#333d47" stroke="none" />
            </svg>
          </Status>
          <Status $w={25} $gap={38}>
            <svg width="26" height="26" viewBox="0 0 26 26">
              <path d="M0 7.500H6L16 0V25L6 18.500H0z" fill="#333d47" />
              <path d="M20 6q6 7 0 14" fill="none" stroke="#333d47" strokeWidth="2.200" />
            </svg>
          </Status>
          <StatusText $w={61} $gap={9} $size={25} $ls={-0.9}>100%</StatusText>
          <Status $w={46} $gap={30}>
            <svg width="46" height="24" viewBox="0 0 46 24">
              <rect x="1" y="1" width="38" height="22" rx="4" fill="none" stroke="#333d47" strokeWidth="2" />
              <rect x="4" y="4" width="32" height="16" rx="1.500" fill="#333d47" />
              <path d="M42 7.500q4 1 4 4.500t-4 4.500z" fill="#333d47" />
              <path d="M23.500-1L10 14h8.500L16 25 30 10h-8.500z" fill="#333d47" stroke="#ebf2fa" strokeWidth="2" />
            </svg>
          </Status>
          <Status $w={32} $gap={41}>
            <svg width="32" height="22" viewBox="0 0 32 22">
              <rect width="32" height="22" fill="#f3f0f0" />
              <path d="M0 1h32M0 5h32M0 9h32M0 13h32M0 17h32M0 21h32" stroke="#a01a2b" strokeWidth="1.900" />
              <rect width="15" height="13" fill="#3a3e74" />
              <path d="M2 2.500h12M2 5h12M2 7.500h12M2 10h12" stroke="#d8d8ea" strokeWidth="1.100" strokeDasharray="1.200 1.300" />
            </svg>
          </Status>
          <StatusText $w={236} $gap={51} $size={28} $ls={-0.3}>Thu Jul 5  1:57 PM</StatusText>
          <Status $w={29} $gap={31}>
            <svg width="29" height="28" viewBox="0 0 29 28" fill="none" stroke="#333d47">
              <circle cx="11" cy="11" r="9.700" strokeWidth="2.400" />
              <path d="M18 18l9 8.500" strokeWidth="3.200" />
            </svg>
          </Status>
          <Status $w={36} $gap={0}>
            <svg width="36" height="20" viewBox="0 0 36 20">
              <path d="M0 2h4M8 2h28M0 10h4M8 10h22M0 18h4M8 18h28" stroke="#333d47" strokeWidth="4" />
            </svg>
          </Status>
        </StatusArea>
      </MenuBar>

      <WindowBack>
        <Window>
          <TabStrip>
            <Lights>
              <Light $fill="#fe615b" $edge="#e2504a" />
              <Light $fill="#ffbe40" $edge="#e0a033" />
              <Light $fill="#33cb4a" $edge="#27ae38" />
            </Lights>
            {tabs.map(([icon, label], i) => {
              const active = i === tabs.length - 1;
              return (
                <Tab key={label} $z={active ? 20 : 10 - i}>
                  <TabShape width="298" height="57" viewBox="0 0 298 57">
                    <path
                      d="M0 57L1.500 54 23 4Q24.500.5 28 .5H270Q273.500.5 275 4L296.500 54 298 57"
                      fill={active ? "#f2f2f2" : "#d0d0d0"}
                      stroke="#979797"
                      strokeWidth="1.200"
                    />
                    {!active && <path d="M0 56.500H298" stroke="#999" />}
                  </TabShape>
                  {favicons[icon]}
                  <TabLabel>{label}</TabLabel>
                  <Close />
                </Tab>
              );
            })}
            <NewTab>
              <svg width="66" height="32" viewBox="0 0 66 32">
                <path d="M4 .7H50Q53 .7 54.500 3L64.500 27Q65.500 30.500 62 30.500H17Q14 30.500 12.500 28L1 4Q0 .7 4 .7z" fill="#cfcfcf" stroke="#9b9b9b" strokeWidth="1.200" />
              </svg>
            </NewTab>
            <UserName>第 1 位用户</UserName>
          </TabStrip>
          <Toolbar>
            <NavButtons>
              <svg width="30" height="28" viewBox="0 0 30 28" fill="none" stroke="#6e7175" strokeWidth="3"><path d="M27 14H3M14.500 2.500L3 14 14.500 25.500" /></svg>
              <svg width="30" height="28" viewBox="0 0 30 28" fill="none" stroke="#d4d5d6" strokeWidth="3"><path d="M1 14H26M14.500 2.500L26 14 14.500 25.500" /></svg>
              <svg width="30" height="28" viewBox="0 0 30 28" fill="none" stroke="#6e7175" strokeWidth="3">
                <path d="M24.500 17.500A11.500 11.500 0 1 1 22 6" />
                <path d="M28 1V12H17z" fill="#6e7175" stroke="none" />
              </svg>
            </NavButtons>
            <UrlField>
              <svg width="27" height="27" viewBox="0 0 27 27">
                <circle cx="13.500" cy="13.500" r="12" fill="none" stroke="#5f6368" strokeWidth="2.600" />
                <path d="M13.500 12v8M13.500 7v3" stroke="#5f6368" strokeWidth="2.600" />
              </svg>
              <Url><b>localhost</b>:3000/location/5b2bee771c765775c8e3d0fd</Url>
              <svg width="32" height="30" viewBox="0 0 32 30">
                <path d="M16 3.500l3.200 8.200 8.800.5-6.800 5.600 2.300 8.500L16 21.500l-7.500 4.800 2.300-8.500L4 12.200l8.800-.5z" fill="none" stroke="#6e7175" strokeWidth="2.600" />
              </svg>
            </UrlField>
            <Extensions>
              <svg width="32" height="32" viewBox="0 0 32 32">
                <path d="M10 1h12l9 9v12l-9 9H10l-9-9V10z" fill="#e8392f" />
                <path d="M10 16V8.500M13.600 16V5.500M17.200 16V4.800M20.800 16V7" stroke="#f3efee" strokeWidth="2.700" strokeLinecap="round" />
                <path d="M8.700 14H22.100V19L24 14.500Q26 13 26.500 15.500L23.500 24Q21.500 29 16 29 9 28.500 8.700 20z" fill="#f3efee" />
              </svg>
              <svg width="32" height="32" viewBox="0 0 32 32">
                <circle cx="16" cy="16" r="15" fill="#2f81c4" />
                <path d="M18 1A15 15 0 0 1 24 29z" fill="#e2622c" />
                <circle cx="14" cy="8.500" r="5" fill="#cfe6f7" />
                <circle cx="14" cy="8.500" r="2.500" fill="#4b91cc" />
                <path d="M3 17l6-3 7 6L27 6l4 4-12 19h-5z" fill="#d5e764" stroke="#f2f7c4" strokeWidth="1" />
              </svg>
              <svg width="32" height="22" viewBox="0 0 32 22">
                <path d="M22 5V2H2v13.500h12" fill="none" stroke="#c7c7c7" strokeWidth="1.800" />
                <path d="M7 16h8Q16 7 24 6.500V2.500L31 9l-7 6.500V12Q19 12 16 17.500V19h-2v2.500H9V19H7z" fill="#c4c4c4" />
              </svg>
              <svg width="32" height="32" viewBox="0 0 32 32">
                <circle cx="16" cy="16" r="16" fill="#1e8f49" />
                <path d="M16 8l8.500 9H20v7h-8v-7H7.500z" fill="#fff" />
              </svg>
            </Extensions>
          </Toolbar>
          <SiteNav>
            <Brand>Loc8r</Brand>
            <NavLink>About</NavLink>
          </SiteNav>
          <Article>
            <Title>404, page not found</Title>
            <Rule />
            <Lead>Oh dear. Looks like we cannot find this page. Sorry.</Lead>
            <Footnote>© Yuan Gao 2018</Footnote>
          </Article>
        </Window>
      </WindowBack>

      <Bottom>
        <FileTree>
          <ul>
            {["bin", "images", "node_modules", "public"].map((name) => (
              <FileRow key={name}>
                <svg width="12" height="18" viewBox="0 0 12 18"><path d="M2 2l7 7-7 7" fill="none" stroke="#6f757f" strokeWidth="3" /></svg>
                <svg width="28" height="24" viewBox="0 0 28 24">
                  <path d="M0 2q0-2 2-2h10q2 0 2 2v2h12q2 0 2 2v16q0 2-2 2H2q-2 0-2-2z" fill="#6d727d" />
                  <path d="M2 3.500h10" stroke="#1b1d21" strokeWidth="2" />
                </svg>
                {name}
              </FileRow>
            ))}
          </ul>
        </FileTree>
        <Dock>
          {dockIcons.map(([name, running, art]) => (
            <DockIcon key={name} running={running}>{art}</DockIcon>
          ))}
          <Divider />
          {dockFiles.map(([name, art]) => (
            <DockIcon key={name}>{art}</DockIcon>
          ))}
        </Dock>
        <RightEdge>
          <ScrollThumb />
          <Wallpaper />
        </RightEdge>
      </Bottom>
    </Screen>
  );
}
